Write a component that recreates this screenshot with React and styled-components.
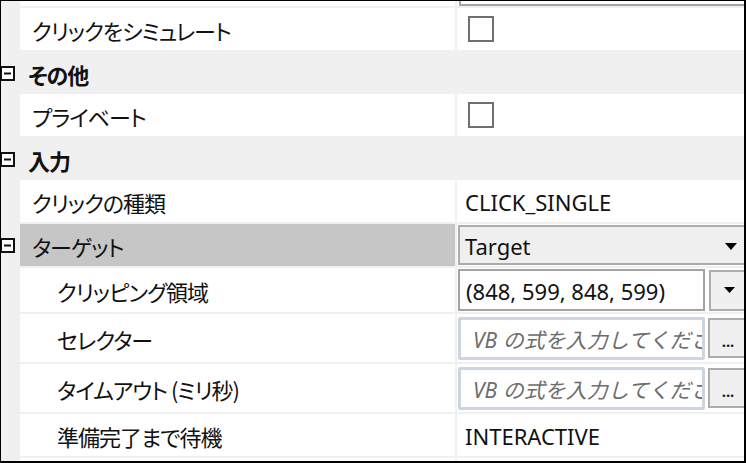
import React from "react";
import styled, { createGlobalStyle } from "styled-components";

const GlobalStyle = createGlobalStyle`
	html, body {
		margin: 0;
		padding: 0;
		background: #ffffff;
	}
	body {
		font-family: "Noto Sans", "Noto Sans CJK JP", sans-serif;
	}
`;

const Frame = styled.div`
	width: 746px;
	height: 463px;
	box-sizing: border-box;
	border-style: solid;
	border-color: #000;
	border-width: 1px 2px 2px 1px;
	overflow: hidden;
	background: #ffffff;
`;

const Grid = styled.div`
	display: flex;
	flex-direction: column;
	margin-top: -37px;
`;

const Row = styled.div`
	display: grid;
	grid-template-columns: 19px 437px 300px;
	height: ${(p) => p.$height || 42}px;
	border-bottom: 2px solid #f0f0f0;
	flex-shrink: 0;
`;

const Gutter = styled.div`
	background: #f0f0f0;
	display: flex;
	align-items: center;
`;

const Label = styled.div`
	display: flex;
	align-items: center;
	padding-left: ${(p) => (p.$indent ? 37 : 12)}px;
	padding-top: 2px;
	box-sizing: border-box;
	border-right: 2px solid #f0f0f0;
	background: ${(p) => (p.$selected ? "#c6c6c6" : "#ffffff")};
	font-family: "Noto Sans CJK JP", sans-serif;
	font-feature-settings: "palt";
	letter-spacing: -1px;
	font-size: 22px;
	color: #111;
	white-space: nowrap;
`;

const Value = styled.div`
	display: flex;
	align-items: center;
	padding-left: ${(p) => (p.$pad === undefined ? 8 : p.$pad)}px;
	padding-top: ${(p) => (p.$text ? 2 : 0)}px;
	box-sizing: border-box;
	font-family: "Noto Sans", sans-serif;
	font-size: 22px;
	color: #111;
	white-space: nowrap;
	overflow: hidden;
`;

const Category = styled.div`
	display: grid;
	grid-template-columns: 19px 1fr;
	height: 42px;
	background: #f0f0f0;
	flex-shrink: 0;
`;

const CategoryTitle = styled.div`
	display: flex;
	align-items: center;
	padding-left: 8px;
	padding-top: 2px;
	font-family: "Noto Sans CJK JP", sans-serif;
	font-feature-settings: "palt";
	letter-spacing: -1px;
	font-weight: 700;
	font-size: 22px;
	color: #111;
`;

const Checkbox = styled.div`
	width: 26px;
	height: 26px;
	box-sizing: border-box;
	border: 2px solid #6f6f6f;
	background: #fff;
	margin-left: 3px;
`;

const Combo = styled.div`
	width: 292px;
	height: 40px;
	margin-left: 1px;
	box-sizing: border-box;
	border: 2px solid #acacac;
	background: #efefef;
	display: flex;
	align-items: center;
	justify-content: space-between;
	padding: 2px 11px 0 5px;
	color: #111;
`;

const TextBox = styled.div`
	width: ${(p) => p.$width || 247}px;
	height: ${(p) => p.$h || 42}px;
	margin-left: 1px;
	box-sizing: border-box;
	border: 2px solid #a3a3a3;
	background: #fff;
	display: flex;
	align-items: center;
	padding: 2px 0 0 6px;
	color: #111;
	flex-shrink: 0;
	overflow: hidden;
`;

const ExprBox = styled.div`
	width: 247px;
	height: 43px;
	margin-left: 1px;
	box-sizing: border-box;
	border: 3px solid #cdd5e0;
	border-radius: 2px;
	background: #fff;
	display: flex;
	align-items: center;
	padding: 2px 0 0 12px;
	overflow: hidden;
	flex-shrink: 0;
	font-family: "Noto Sans", "Noto Sans CJK JP", sans-serif;
	font-size: 21px;
	font-style: italic;
	color: #6d6d6d;
	white-space: nowrap;
`;

const SideButton = styled.div`
	width: 40px;
	height: ${(p) => p.$h || 40}px;
	margin-left: ${(p) => p.$gap || 3}px;
	box-sizing: border-box;
	border: 2px solid #adadad;
	background: #f0f0f0;
	display: flex;
	align-items: center;
	justify-content: center;
	flex-shrink: 0;
	font-size: 15px;
	font-weight: 700;
	color: #222;
	padding-top: ${(p) => (p.$arrow ? 0 : 6)}px;
`;

const Arrow = ({ w = 12, h = 7 }) => (
	<svg width={w} height={h} viewBox={`0 0 ${w} ${h}`}>
		<polygon points={`0,0 ${w},0 ${w / 2},${h}`} fill="#000" />
	</svg>
);

const CollapseIcon = styled.svg`
	margin-left: -1px;
`;

const Collapse = () => (
	<CollapseIcon width="15" height="15" viewBox="0 0 15 15">
		<rect x="1" y="1" width="13" height="13" fill="#fff" stroke="#111" strokeWidth="2" />
		<rect x="4" y="6.5" width="7" height="2" fill="#111" />
	</CollapseIcon>
);

const Prop = ({ label, indent, selected, collapsible, height, children, pad, text }) => (
	<Row $height={height}>
		<Gutter>{collapsible && <Collapse />}</Gutter>
		<Label $indent={indent} $selected={selected}>
			{label}
		</Label>
		<Value $pad={pad} $text={text}>
			{children}
		</Value>
	</Row>
);

const Group = ({ title }) => (
	<Category>
		<Gutter>
			<Collapse />
		</Gutter>
		<CategoryTitle>{title}</CategoryTitle>
	</Category>
);

const Expr = () => (
	<>
		<ExprBox>VB の式を入力してください</ExprBox>
		<SideButton>...</SideButton>
	</>
);

const App = () => {
	return (
		<>
			<GlobalStyle />
			<Frame>
				<Grid>
					<Prop label="" height={42} pad={1}>
						<TextBox $width={300} $h={41} />
					</Prop>
					<Prop label="クリックをシミュレート">
						<Checkbox />
					</Prop>
					<Group title="その他" />
					<Prop label="プライベート">
						<Checkbox />
					</Prop>
					<Group title="入力" />
					<Prop label="クリックの種類" text>
						CLICK_SINGLE
					</Prop>
					<Prop label="ターゲット" selected collapsible pad={0}>
						<Combo>
							<span>Target</span>
							<Arrow />
						</Combo>
					</Prop>
					<Prop label="クリッピング領域" indent height={44} pad={0}>
						<TextBox>(848, 599, 848, 599)</TextBox>
						<SideButton $h={41} $gap={4} $arrow>
							<Arrow w={11} h={6} />
						</SideButton>
					</Prop>
					<Prop label="セレクター" indent height={48} pad={0}>
						<Expr />
					</Prop>
					<Prop label="タイムアウト (ミリ秒)" indent height={48} pad={0}>
						<Expr />
					</Prop>
					<Prop label="準備完了まで待機" indent text>
						INTERACTIVE
					</Prop>
					<Prop label="" indent height={48} pad={0}>
						<Expr />
					</Prop>
				</Grid>
			</Frame>
		</>
	);
};

export default App;
